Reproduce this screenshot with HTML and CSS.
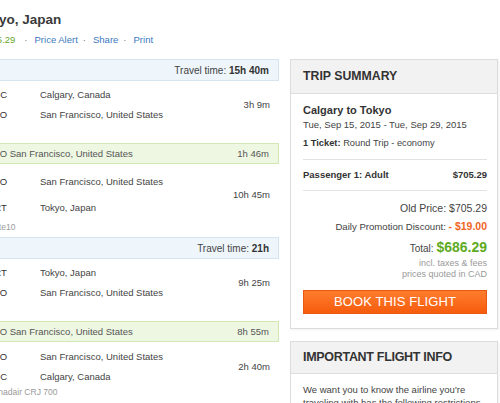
FILE: index.html
```html
<!DOCTYPE html>
<html lang="en">
<head>
<meta charset="utf-8">
<title>Calgary to Tokyo</title>
<link rel="stylesheet" href="styles.css">
</head>
<body>
<div class="page">
  <header class="top">
    <h1 class="title">Tokyo, Japan</h1>
    <div class="meta"><span class="price">$705.29</span><span class="sep first">·</span><a class="link">Price Alert</a><span class="sep">·</span><a class="link">Share</a><span class="sep">·</span><a class="link">Print</a></div>
  </header>
  <div class="cols">
    <section class="itin">
      <div class="bar travel">Travel time:&nbsp;<b>15h 40m</b></div>
      <div class="seg seg-a">
        <div class="legs">
          <span class="code">YYC</span><span class="city">Calgary, Canada</span><span class="dur">3h 9m</span>
          <span class="code">SFO</span><span class="city">San Francisco, United States</span>
        </div>
      </div>
      <div class="bar layover"><span>SFO San Francisco, United States</span><span>1h 46m</span></div>
      <div class="seg seg-b">
        <div class="legs">
          <span class="code">SFO</span><span class="city">San Francisco, United States</span><span class="dur">10h 45m</span>
          <span class="code">NRT</span><span class="city">Tokyo, Japan</span>
        </div>
        <div class="note">Gate10</div>
      </div>
      <div class="bar travel">Travel time:&nbsp;<b>21h</b></div>
      <div class="seg seg-a">
        <div class="legs">
          <span class="code">NRT</span><span class="city">Tokyo, Japan</span><span class="dur">9h 25m</span>
          <span class="code">SFO</span><span class="city">San Francisco, United States</span>
        </div>
      </div>
      <div class="bar layover"><span>SFO San Francisco, United States</span><span>8h 55m</span></div>
      <div class="seg seg-c">
        <div class="legs">
          <span class="code">SFO</span><span class="city">San Francisco, United States</span><span class="dur">2h 40m</span>
          <span class="code">YYC</span><span class="city">Calgary, Canada</span>
        </div>
        <div class="note">Canadair CRJ 700</div>
      </div>
    </section>
    <aside class="side">
      <div class="card">
        <div class="card-head">TRIP SUMMARY</div>
        <div class="card-body">
          <div class="route">Calgary to Tokyo</div>
          <div class="dates">Tue, Sep 15, 2015 - Tue, Sep 29, 2015</div>
          <div class="ticket"><b>1 Ticket:</b> Round Trip - economy</div>
          <div class="pax"><span>Passenger 1: Adult</span><span>$705.29</span></div>
          <div class="prices">
            <div class="old">Old Price: $705.29</div>
            <div class="disc">Daily Promotion Discount: <b>- $19.00</b></div>
            <div class="total">Total: <b>$686.29</b></div>
            <div class="fine">incl. taxes &amp; fees<br>prices quoted in CAD</div>
          </div>
          <a class="book">BOOK THIS FLIGHT</a>
        </div>
      </div>
      <div class="card card-info">
        <div class="card-head head-info">IMPORTANT FLIGHT INFO</div>
        <div class="card-body info-body">
          <p class="info-text">We want you to know the airline you're traveling with has the following restrictions on this fare.</p>
        </div>
      </div>
    </aside>
  </div>
</div>
</body>
</html>
```
FILE: styles.css
```css
html, body {
  margin: 0;
  padding: 0;
}
body {
  width: 500px;
  height: 403px;
  overflow: hidden;
  background: #fff;
  color: #333;
  font-family: "Liberation Sans", Arial, sans-serif;
}
.page {
  margin-left: -21px;
  width: 519px;
}
.top {
  height: 59px;
  box-sizing: border-box;
  padding-top: 11px;
}
.title {
  margin: 0 0 0 -3px;
  font-size: 13.5px;
  line-height: 17px;
  font-weight: bold;
  color: #3a3a3a;
}
.meta {
  margin: 5px 0 0 2px;
  font-size: 9.5px;
  line-height: 13px;
  white-space: nowrap;
}
.price {
  color: #66a82a;
}
.sep {
  color: #777;
  margin: 0 7px 0 5px;
}
.sep.first {
  margin-left: 9px;
}
.link {
  color: #3b79c0;
  text-decoration: none;
}
.cols {
  display: grid;
  grid-template-columns: 300px 208px;
  column-gap: 11px;
  align-items: start;
}

/* itinerary */
.bar {
  display: flex;
  align-items: center;
  box-sizing: border-box;
  border: 1px solid;
}
.travel {
  height: 22px;
  justify-content: flex-end;
  padding-right: 9px;
  background: #eef5fb;
  border-color: #d6e4ef;
  font-size: 10px;
  color: #444;
}
.travel b {
  color: #333;
}
.layover {
  height: 21px;
  justify-content: space-between;
  padding: 0 9px 0 7.5px;
  background: #eef7e2;
  border-color: #d2e7b6;
  font-size: 9.5px;
  color: #555;
}
.seg {
  padding-left: 8.5px;
  padding-right: 9px;
}
.legs {
  display: grid;
  grid-template-columns: 52.5px 1fr auto;
  grid-auto-rows: 20px;
  align-items: center;
  font-size: 9.5px;
  color: #444;
}
.code {
  grid-column: 1;
  color: #333;
}
.city {
  grid-column: 2;
}
.dur {
  grid-column: 3;
  grid-row: 1 / span 2;
  align-self: center;
}
.seg-a {
  padding-top: 3.5px;
  padding-bottom: 18.5px;
}
.seg-b {
  padding-top: 7px;
  padding-bottom: 4px;
}
.seg-b .legs {
  row-gap: 6px;
}
.seg-b .note {
  margin-top: 4px;
}
.seg-c {
  padding-top: 4px;
}
.note {
  font-size: 8.5px;
  line-height: 12px;
  color: #9a9a9a;
  white-space: nowrap;
}

/* summary cards */
.card {
  border: 1px solid #dcdcdc;
  background: #fff;
  box-shadow: 1px 1px 2px rgba(0, 0, 0, 0.06);
}
.card-head {
  height: 33px;
  line-height: 33px;
  padding-left: 12px;
  background: #f2f2f2;
  border-bottom: 1px solid #dcdcdc;
  font-size: 12.3px;
  font-weight: bold;
  color: #333;
}
.card-body {
  padding: 8.5px 10px 14px 12px;
}
.route {
  font-size: 11px;
  line-height: 15px;
  font-weight: bold;
  color: #333;
}
.dates {
  font-size: 9.5px;
  line-height: 14px;
  color: #444;
}
.ticket {
  margin-top: 4px;
  font-size: 9.3px;
  line-height: 14px;
  color: #444;
}
.ticket b {
  color: #333;
}
.pax {
  display: flex;
  justify-content: space-between;
  margin-top: 9px;
  padding: 8px 0;
  border-top: 1px solid #e2e2e2;
  border-bottom: 1px solid #e2e2e2;
  font-size: 9.5px;
  line-height: 14px;
  font-weight: bold;
  color: #333;
}
.prices {
  margin-top: 10px;
  text-align: right;
  white-space: nowrap;
}
.old {
  font-size: 10.5px;
  line-height: 14px;
  color: #444;
}
.disc {
  margin-top: 4px;
  font-size: 9.6px;
  line-height: 14px;
  color: #444;
}
.disc b {
  font-size: 10.5px;
  color: #f0651f;
}
.total {
  margin-top: 4px;
  font-size: 10px;
  line-height: 18px;
  color: #444;
}
.total b {
  font-size: 14px;
  color: #5fab1f;
}
.fine {
  font-size: 9px;
  line-height: 11.5px;
  color: #9a9a9a;
}
.book {
  display: flex;
  align-items: center;
  justify-content: center;
  height: 24px;
  margin-top: 9px;
  box-sizing: border-box;
  border: 1px solid #e95a10;
  background: linear-gradient(#ff7d2e, #f65c0d);
  color: #fff;
  font-size: 13px;
  letter-spacing: 0.1px;
  text-decoration: none;
}
.card-info {
  margin-top: 12px;
}
.head-info {
  height: 31px;
  line-height: 31px;
  font-size: 12.5px;
  letter-spacing: -0.3px;
}
.info-body {
  padding-top: 9px;
}
.info-text {
  margin: 0;
  font-size: 9.5px;
  line-height: 13px;
  color: #444;
}
```
